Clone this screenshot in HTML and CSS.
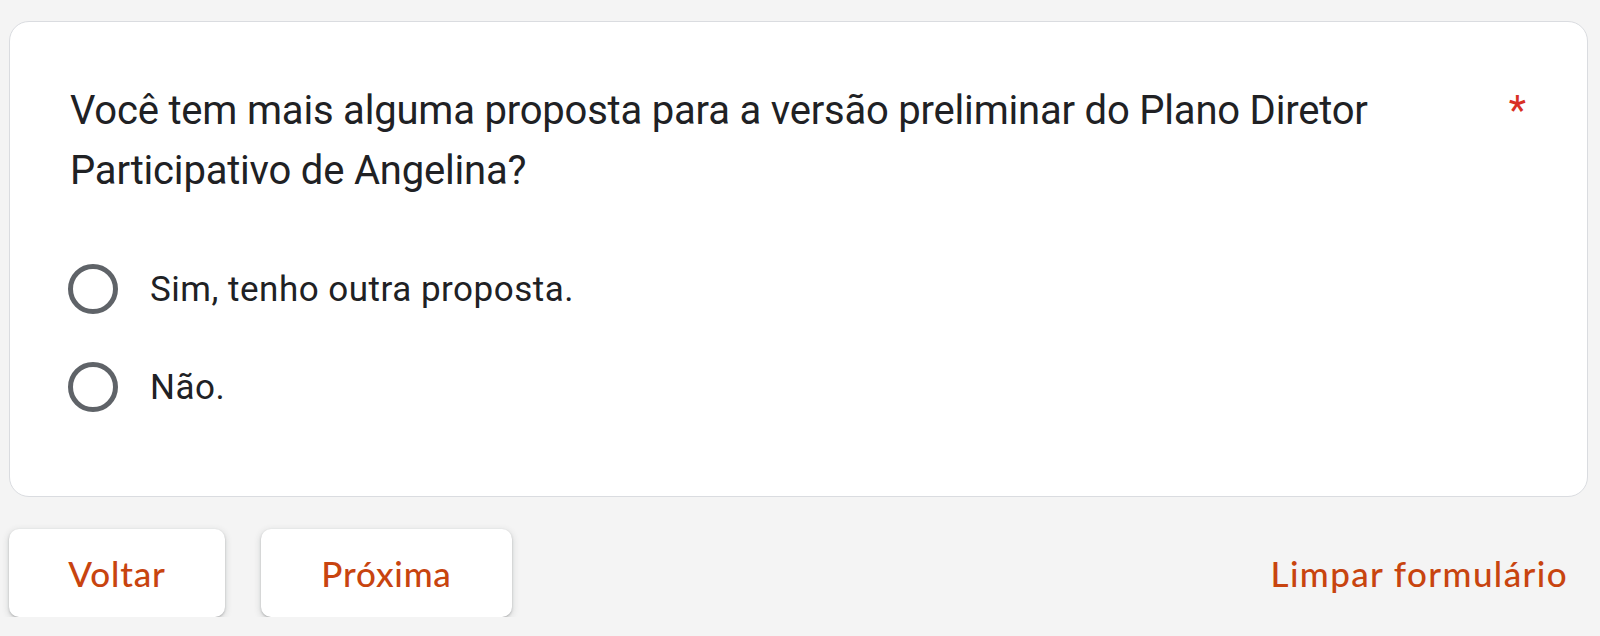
FILE: index.html
```html
<!DOCTYPE html>
<html>
<head>
    <title>Plano Diretor Participativo</title>
    <link rel="stylesheet" href="styles.css">
</head>
<body>
    <div class="page">
        <div class="card">
            <div class="question">
                <span class="question-title">Você tem mais alguma proposta para a versão preliminar do Plano Diretor Participativo de Angelina?</span>
                <span class="required">*</span>
            </div>

            <label class="option">
                <span class="radio"></span>
                <span class="option-text">Sim, tenho outra proposta.</span>
            </label>
            <label class="option">
                <span class="radio"></span>
                <span class="option-text">Não.</span>
            </label>
        </div>

        <div class="actions">
            <button class="btn btn-back">Voltar</button>
            <button class="btn btn-next">Próxima</button>
            <button class="btn-clear">Limpar formulário</button>
        </div>
    </div>
</body>
</html>
```

FILE: styles.css
```css
body {
    margin: 0;
    background-color: #f4f4f4;
    font-family: 'Roboto', 'Liberation Sans', sans-serif;
    color: #202124;
}

.page {
    padding: 21px 12px 0 9px;
}

.card {
    background-color: #fff;
    border: 1px solid #dadce0;
    border-radius: 20px;
    padding: 59px 60px 60px 60px;
}

.question {
    display: flex;
    justify-content: space-between;
    align-items: flex-start;
    font-size: 40px;
    line-height: 60px;
}

.question-title {
    max-width: 1380px;
    letter-spacing: -0.2px;
}

.required {
    color: #d93025;
    font-size: 40px;
    line-height: 60px;
    padding-left: 20px;
    margin-right: 1px;
}

.option {
    display: flex;
    align-items: center;
    height: 98px;
    font-size: 35px;
    letter-spacing: 0.5px;
}

.option:first-of-type {
    margin-top: 39px;
}

.radio {
    width: 40px;
    height: 40px;
    border: 5px solid #5f6368;
    border-radius: 50%;
    margin-left: -2px;
    margin-right: 32px;
    flex-shrink: 0;
}

.actions {
    display: flex;
    align-items: center;
    margin-top: 32px;
}

.btn {
    background-color: #fff;
    border: none;
    border-radius: 10px;
    height: 88px;
    padding: 0;
    font-family: 'Lato', 'Open Sans', sans-serif;
    font-size: 35px;
    font-weight: 500;
    letter-spacing: 0.8px;
    color: #c8440f;
    box-shadow: 0 1px 2px rgba(60, 64, 67, 0.3), 0 2px 6px 1px rgba(60, 64, 67, 0.15);
    cursor: pointer;
}

.btn-back {
    width: 216px;
}

.btn-next {
    width: 251px;
    margin-left: 36px;
}

.btn-clear {
    margin-left: auto;
    background: none;
    border: none;
    padding: 0 20px;
    height: 88px;
    font-family: 'Lato', 'Open Sans', sans-serif;
    font-size: 35px;
    font-weight: 500;
    letter-spacing: 1.4px;
    color: #c8440f;
    cursor: pointer;
}
```
